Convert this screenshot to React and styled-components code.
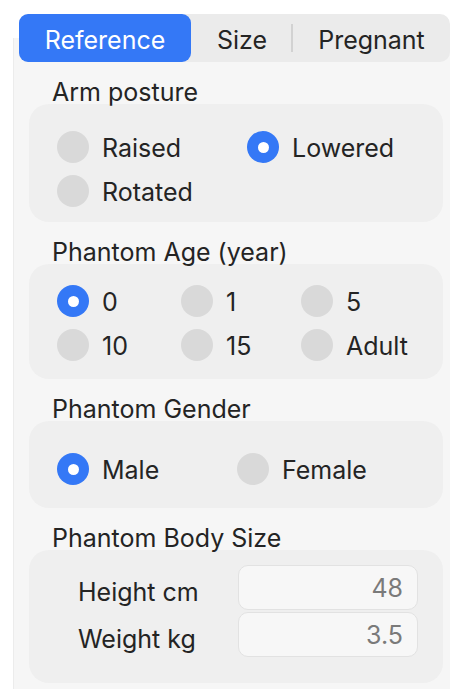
import React from 'react';
import styled, { createGlobalStyle } from 'styled-components';

const GlobalStyle = createGlobalStyle`
  html, body {
    margin: 0;
    background: #ffffff;
  }
  body {
    font-family: Inter, "Noto Sans", "Liberation Sans", sans-serif;
    color: #242424;
  }
`;

const tabs = ['Reference', 'Size', 'Pregnant'];

const armOptions = ['Raised', 'Lowered', 'Rotated'];
const ageOptions = ['0', '1', '5', '10', '15', 'Adult'];
const genderOptions = ['Male', 'Female'];

const App = () => {
  return (
    <Page>
      <GlobalStyle />
      <TabBar>
        {tabs.map((tab, i) => (
          <Tab key={tab} active={i === 0} width={[172, 102, 157][i]} divider={i === 1}>
            {tab}
          </Tab>
        ))}
      </TabBar>
      <Panel>
        <Label>Arm posture</Label>
        <Group pad='27px 0 15px 28px' cols='190px 190px'>
          {armOptions.map((opt) => (
            <Radio key={opt} label={opt} checked={opt === 'Lowered'} />
          ))}
        </Group>

        <Label>Phantom Age (year)</Label>
        <Group pad='21px 0 18px 28px' cols='124px 120px 120px'>
          {ageOptions.map((opt) => (
            <Radio key={opt} label={opt} checked={opt === '0'} />
          ))}
        </Group>

        <Label>Phantom Gender</Label>
        <Group pad='32px 0 23px 28px' cols='180px 180px'>
          {genderOptions.map((opt) => (
            <Radio key={opt} label={opt} checked={opt === 'Male'} />
          ))}
        </Group>

        <Label>Phantom Body Size</Label>
        <SizeGroup>
          <FieldLabel>Height cm</FieldLabel>
          <Field>48</Field>
          <FieldLabel>Weight kg</FieldLabel>
          <Field>3.5</Field>
        </SizeGroup>
      </Panel>
    </Page>
  );
};

const Radio = ({ label, checked }) => (
  <Option>
    <Dot checked={checked} />
    <span>{label}</span>
  </Option>
);

const Page = styled.div`
  width: 450px;
  height: 690px;
  padding: 14px 0 0 13px;
  box-sizing: border-box;
  overflow: hidden;
`;

const TabBar = styled.div`
  position: relative;
  z-index: 1;
  display: flex;
  align-items: center;
  width: 431px;
  height: 48px;
  margin: 0 0 -24px 6px;
  border-radius: 10px;
  background: #ebebeb;
`;

const Tab = styled.div`
  position: relative;
  display: flex;
  align-items: center;
  justify-content: center;
  width: ${({ width }) => width}px;
  height: 48px;
  padding-top: 3px;
  box-sizing: border-box;
  border-radius: 9px;
  font-size: 25px;
  color: ${({ active }) => (active ? '#ffffff' : '#242424')};
  background: ${({ active }) => (active ? '#3478f6' : 'transparent')};

  &::after {
    content: '';
    display: ${({ divider }) => (divider ? 'block' : 'none')};
    position: absolute;
    right: 0;
    top: 10px;
    width: 2px;
    height: 28px;
    background: #d2d2d2;
  }
`;

const Panel = styled.div`
  display: flex;
  flex-direction: column;
  height: 651px;
  padding: 43px 7px 6px 15px;
  box-sizing: border-box;
  background: #f6f6f6;
  border-left: 1px solid #ececec;
`;

// label text hangs a little into the box below, so keep it painted on top
const Label = styled.div`
  position: relative;
  z-index: 1;
  font-size: 25px;
  line-height: 23px;
  padding-left: 23px;
  margin-top: 19px;

  &:first-child {
    margin-top: 0;
  }
`;

const Group = styled.div`
  display: grid;
  grid-template-columns: ${({ cols }) => cols};
  row-gap: 12px;
  padding: ${({ pad }) => pad};
  border-radius: 20px;
  background: #efefef;
`;

const Option = styled.div`
  display: flex;
  align-items: center;
  gap: 13px;
  height: 32px;
  font-size: 25px;
  padding-top: 2px;
  box-sizing: border-box;
`;

const Dot = styled.span`
  position: relative;
  flex: none;
  width: 32px;
  height: 32px;
  margin-top: -2px;
  border-radius: 50%;
  background: ${({ checked }) => (checked ? '#3478f6' : '#d9d9d9')};

  &::after {
    content: '';
    display: ${({ checked }) => (checked ? 'block' : 'none')};
    position: absolute;
    left: 10.5px;
    top: 10.5px;
    width: 11px;
    height: 11px;
    border-radius: 50%;
    background: #ffffff;
  }
`;

const SizeGroup = styled.div`
  display: grid;
  grid-template-columns: 160px 180px;
  row-gap: 2px;
  align-items: center;
  flex: 1;
  align-content: start;
  padding: 15px 0 0 49px;
  border-radius: 20px;
  background: #efefef;
`;

const FieldLabel = styled.div`
  font-size: 25px;
  padding-top: 8px;
`;

const Field = styled.div`
  height: 45px;
  display: flex;
  align-items: center;
  justify-content: flex-end;
  padding-right: 14px;
  box-sizing: border-box;
  border: 1px solid #e2e2e2;
  border-radius: 10px;
  background: #f7f7f7;
  font-size: 25px;
  color: #7a7a7a;
`;

export default App;
